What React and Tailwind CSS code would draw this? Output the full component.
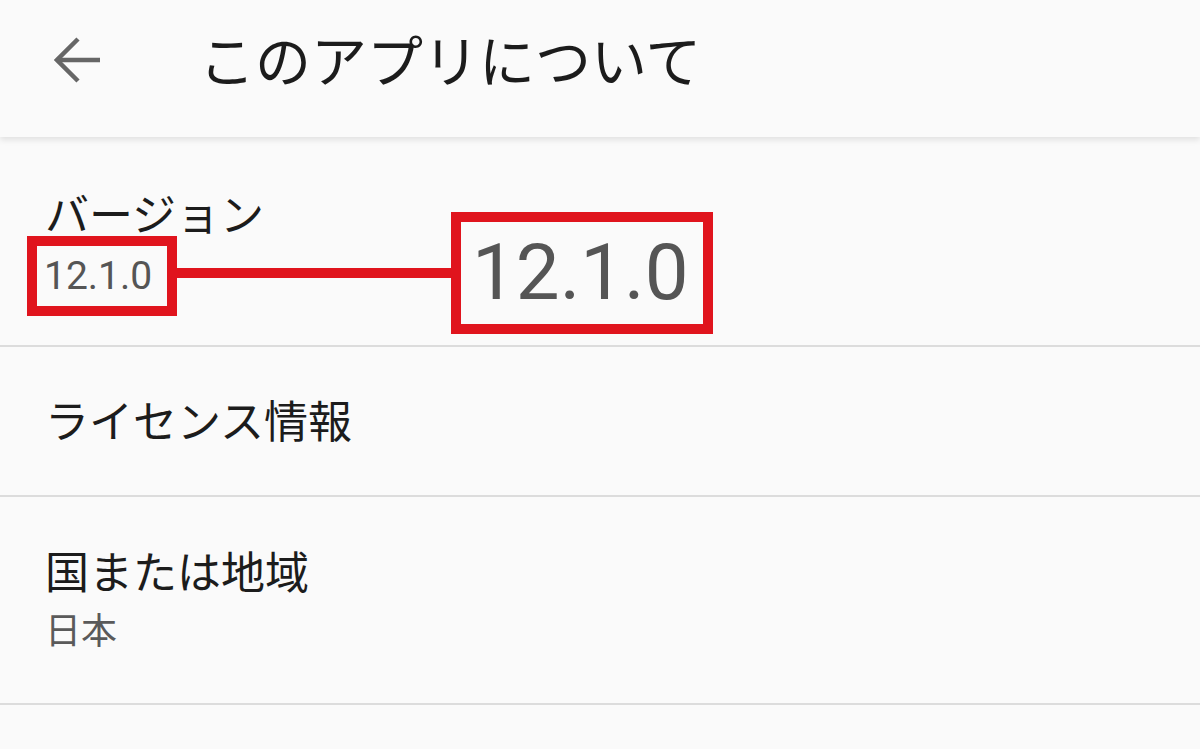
export default function App() {
  const jp = "font-['Noto_Sans_CJK_JP',sans-serif]";
  const num = "font-['Roboto','Noto_Sans',sans-serif]";

  return (
    <div className="w-[1200px] h-[749px] overflow-hidden bg-[#fafafa] flex flex-col">
      {/* ヘッダー */}
      <header className="relative z-10 h-[137px] shrink-0 flex items-start pt-[30px] pl-[54px] bg-[#fafafa] shadow-[0_3px_6px_rgba(0,0,0,0.10)]">
        <svg
          className="mt-[6px] w-[48px] h-[48px] shrink-0"
          viewBox="0 0 48 48"
          fill="none"
          stroke="#666666"
          strokeWidth="4.5"
        >
          <path d="M46 24H3" />
          <path d="M24 3L3 24L24 45" />
        </svg>
        <h1 className={`${jp} ml-[97px] text-[56px] leading-none font-normal text-[#1c1c1c]`}>
          このアプリについて
        </h1>
      </header>

      {/* バージョン */}
      <div className="h-[210px] shrink-0 border-b-2 border-[#dcdcdc] pt-[53px] pl-[27px]">
        <p className={`${jp} ml-[18px] text-[44px] leading-none text-[#1c1c1c]`}>
          バージョン
        </p>
        <div className="mt-[2px] flex items-start">
          <div className="w-[150px] h-[80px] shrink-0 border-[10px] border-[#e0141d] pl-[7px]">
            <span className={`${num} block text-[39px] leading-[60px] text-[#555555]`}>12.1.0</span>
          </div>
          <div className="mt-[32px] w-[274px] h-[10px] shrink-0 bg-[#e0141d]" />
          <div className="-mt-[24px] w-[262px] h-[122px] shrink-0 border-[10px] border-[#e0141d] pl-[11px] bg-[#fafafa]">
            <span className={`${num} block text-[78px] leading-[102px] text-[#555555]`}>12.1.0</span>
          </div>
        </div>
      </div>

      {/* ライセンス情報 */}
      <div className="h-[150px] shrink-0 border-b-2 border-[#dcdcdc] pt-[50px] pl-[45px]">
        <p className={`${jp} text-[44px] leading-none text-[#1c1c1c]`}>ライセンス情報</p>
      </div>

      {/* 国または地域 */}
      <div className="h-[208px] shrink-0 border-b-2 border-[#dcdcdc] pt-[51px] pl-[45px]">
        <p className={`${jp} text-[44px] leading-none text-[#1c1c1c]`}>国または地域</p>
        <p className={`${jp} mt-[18px] text-[36px] leading-none text-[#5a5a5a]`}>日本</p>
      </div>

      <div className="flex-1" />
    </div>
  );
}
